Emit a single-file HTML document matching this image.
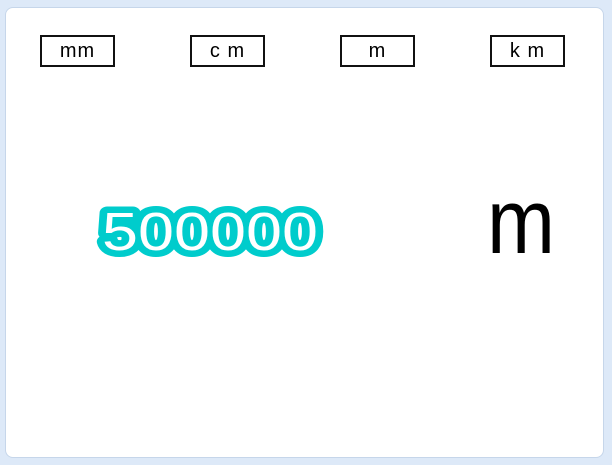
<!DOCTYPE html>
<html><head><style>
html,body{margin:0;padding:0;width:612px;height:465px;background:#dde9f8;overflow:hidden}
.card{position:absolute;left:5px;top:7px;width:597px;height:449px;background:#fff;border:1px solid #c6d6ea;border-radius:8px}
.b{position:absolute;top:35px;border:2px solid #111;font:20px "Liberation Sans",sans-serif;text-align:center;line-height:28px;color:#000;width:71px;height:28px;letter-spacing:1px}
svg{position:absolute;left:0;top:0}
</style></head><body>
<div class="card"></div>
<div class="b" style="left:40px">mm</div>
<div class="b" style="left:190px">c m</div>
<div class="b" style="left:340px">m</div>
<div class="b" style="left:490px">k m</div>
<svg width="612" height="465">
<text x="102" y="250" font-family="Liberation Sans" font-size="54" textLength="216" lengthAdjust="spacingAndGlyphs" fill="#fff" stroke="#00cccc" stroke-width="13" stroke-linejoin="round" paint-order="stroke">500000</text>
<text x="487" y="253" font-family="Liberation Sans" font-size="92" textLength="68" lengthAdjust="spacingAndGlyphs" fill="#000">m</text>
</svg>
</body></html>
